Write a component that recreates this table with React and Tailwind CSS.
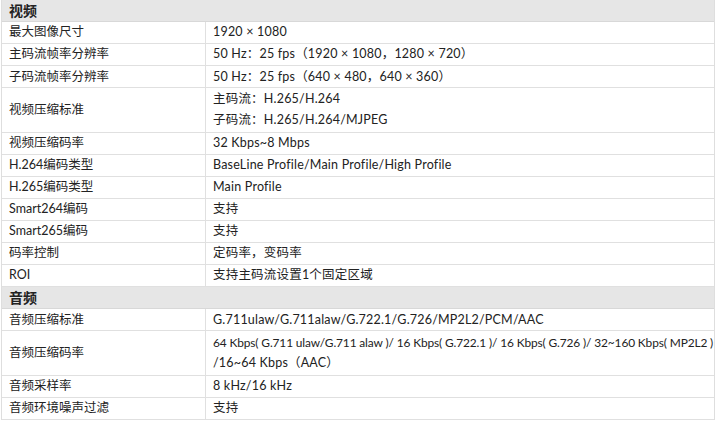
import React from 'react';

const sections = [
  {
    title: '视频',
    rows: [
      ['最大图像尺寸', ['1920 × 1080']],
      ['主码流帧率分辨率', ['50 Hz：25 fps（1920 × 1080，1280 × 720）']],
      ['子码流帧率分辨率', ['50 Hz：25 fps（640 × 480，640 × 360）']],
      ['视频压缩标准', ['主码流：H.265/H.264', '子码流：H.265/H.264/MJPEG']],
      ['视频压缩码率', ['32 Kbps~8 Mbps']],
      ['H.264编码类型', ['BaseLine Profile/Main Profile/High Profile']],
      ['H.265编码类型', ['Main Profile']],
      ['Smart264编码', ['支持']],
      ['Smart265编码', ['支持']],
      ['码率控制', ['定码率，变码率']],
      ['ROI', ['支持主码流设置1个固定区域']],
    ],
  },
  {
    title: '音频',
    rows: [
      ['音频压缩标准', ['G.711ulaw/G.711alaw/G.722.1/G.726/MP2L2/PCM/AAC']],
      [
        '音频压缩码率',
        [
          '64 Kbps( G.711 ulaw/G.711 alaw )/ 16 Kbps( G.722.1 )/ 16 Kbps( G.726 )/ 32~160 Kbps( MP2L2 )',
          '/16~64 Kbps（AAC）',
        ],
      ],
      ['音频采样率', ['8 kHz/16 kHz']],
      ['音频环境噪声过滤', ['支持']],
    ],
  },
];

const font = { fontFamily: 'Lato, "Noto Sans CJK SC", sans-serif' };

export default function App() {
  return (
    <div className="w-[718px] h-[425px] bg-white pl-[1px] pr-[3px] text-[#222] overflow-hidden" style={font}>
      <div className="border-l border-r border-[#dedede]">
        {sections.map((s) => (
          <div key={s.title}>
            <div className="h-[22.1px] bg-[#e6e6e6] border-b border-[#d8d8d8] flex items-center pl-[7px] text-[14px] font-bold leading-none">
              {s.title}
            </div>
            {s.rows.map(([k, v]) => (
              <div
                key={k}
                className={`flex border-b border-[#e0e0e0] ${v.length > 1 ? 'h-[44.2px]' : 'h-[22.1px]'}`}
              >
                <div className="w-[204px] shrink-0 border-r border-[#e0e0e0] flex items-center pl-[7px] text-[12.5px] leading-none">
                  {k}
                </div>
                <div className="flex-1 min-w-0 flex flex-col justify-around py-[1px] pl-[7px] text-[12.5px] leading-none whitespace-nowrap">
                  {v.map((line) => (
                    <div
                      key={line}
                      className={line.length > 60 ? 'text-[11.9px] tracking-[-0.12px]' : 'tracking-[0.2px]'}
                    >
                      {line}
                    </div>
                  ))}
                </div>
              </div>
            ))}
          </div>
        ))}
      </div>
    </div>
  );
}
